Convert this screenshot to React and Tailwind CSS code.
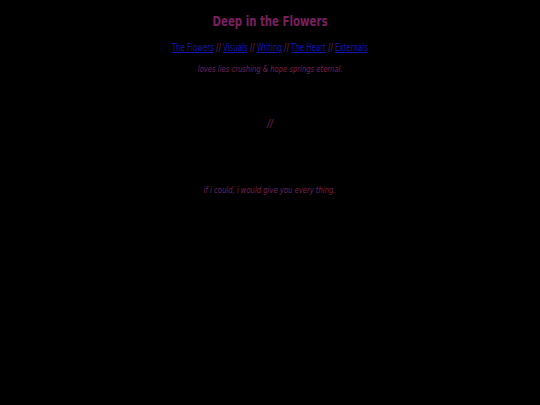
import React from 'react';

const links = ['The Flowers', 'Visuals', 'Writing', 'The Heart', 'Externals'];

export default function App() {
    return (
        <div className="min-h-screen bg-black text-center text-[#74205c]" style={{ fontFamily: '"DejaVu Sans Condensed", "DejaVu Sans", sans-serif' }}>
            <div className="pt-[12px]">
                <h1 className="text-[14px] font-bold leading-[18px] text-[#7a1f60]">
                    <span className="inline-block scale-x-[0.81]">Deep in the Flowers</span>
                </h1>

                <div className="mt-[11px] text-[10px] leading-[13px]">
                    <span className="inline-block scale-x-[0.78]">
                        {links.map((l, i) => (
                            <span key={l}>
                                <a href="#" className="underline text-[#1515b0]">{l}</a>
                                {i < links.length - 1 && ' // '}
                            </span>
                        ))}
                    </span>
                </div>

                <p className="mt-[9px] text-[9px] italic leading-[12px]">
                    <span className="inline-block scale-x-[0.84]">loves lies crushing &amp; hope springs eternal.</span>
                </p>

                <p className="mt-[43px] text-[10px] italic leading-[12px]">//</p>

                <p className="mt-[54px] text-[9px] italic leading-[12px]">
                    <span className="inline-block scale-x-[0.84]">if i could, i would give you every thing.</span>
                </p>
            </div>
        </div>
    );
}
